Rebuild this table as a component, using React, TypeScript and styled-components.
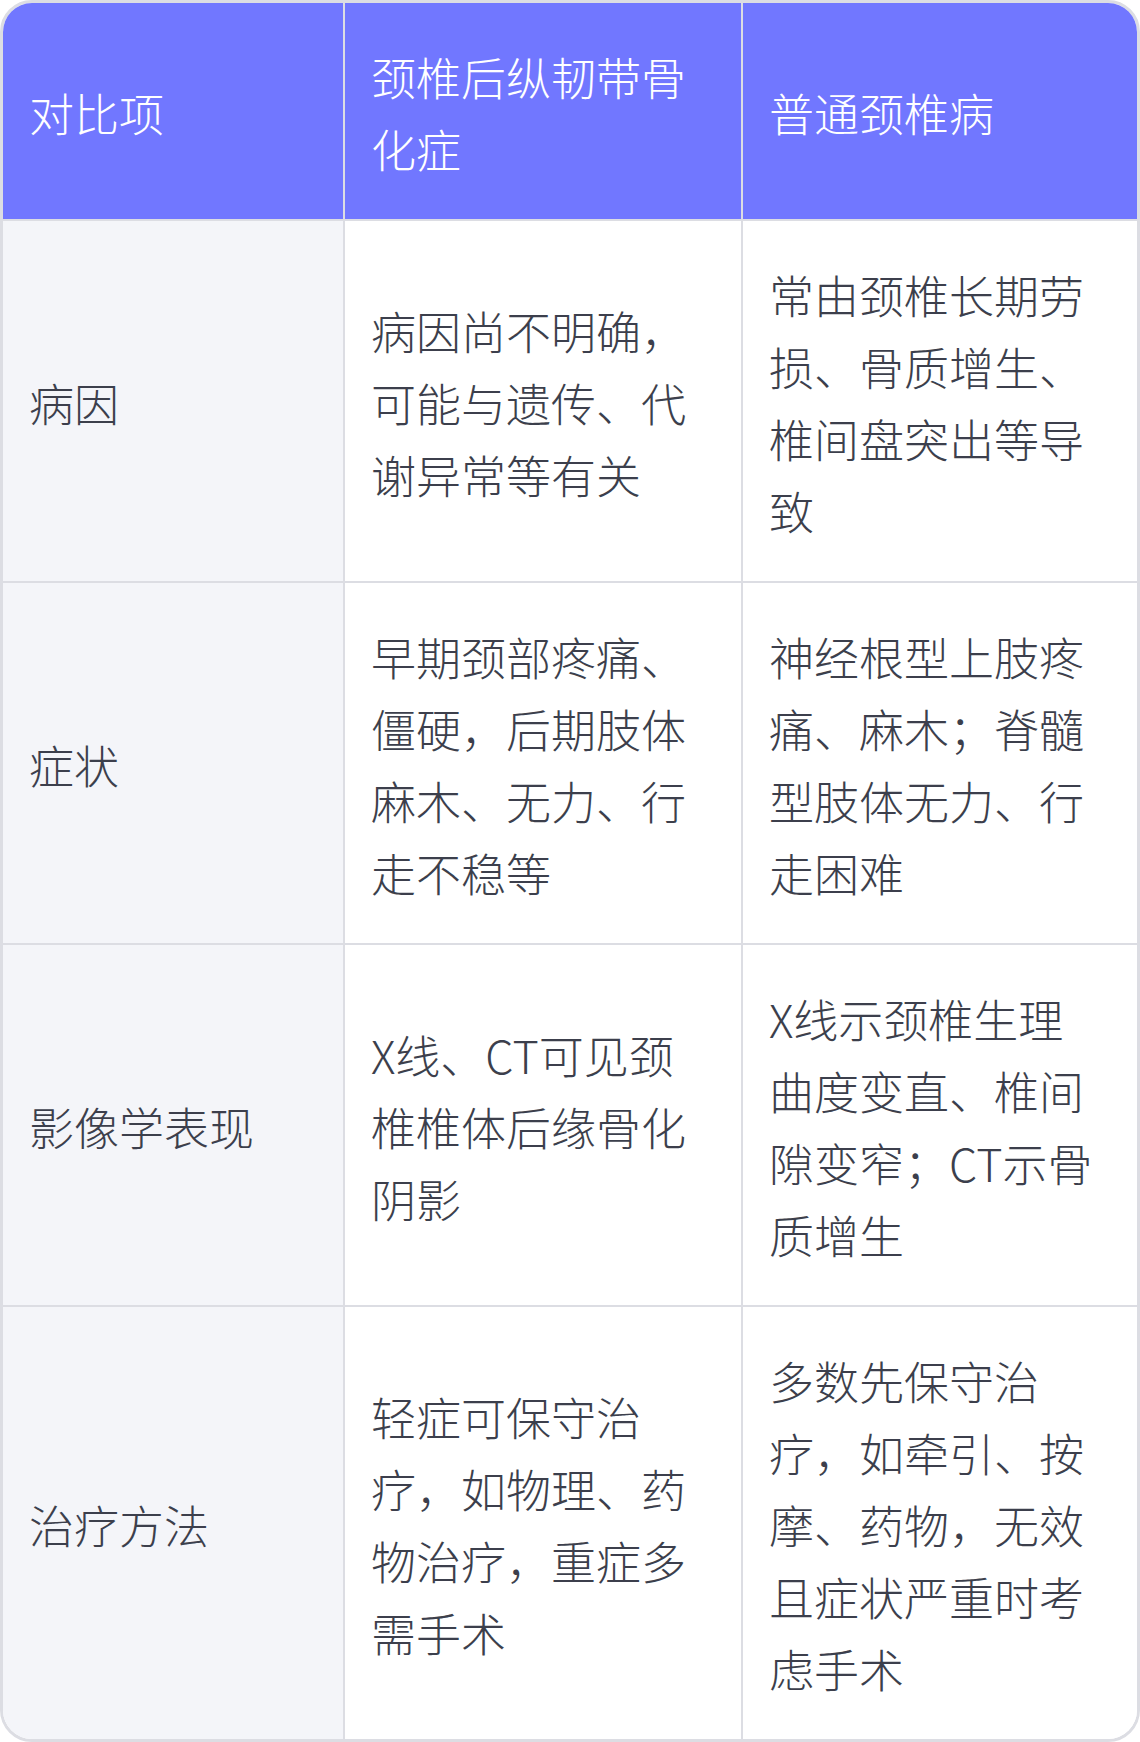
import styled, { createGlobalStyle } from "styled-components";

const rows: { item: string; ossified: string; common: string }[] = [
  {
    item: "病因",
    ossified: "病因尚不明确，可能与遗传、代谢异常等有关",
    common: "常由颈椎长期劳损、骨质增生、椎间盘突出等导致",
  },
  {
    item: "症状",
    ossified: "早期颈部疼痛、僵硬，后期肢体麻木、无力、行走不稳等",
    common: "神经根型上肢疼痛、麻木；脊髓型肢体无力、行走困难",
  },
  {
    item: "影像学表现",
    ossified: "X线、CT可见颈椎椎体后缘骨化阴影",
    common: "X线示颈椎生理曲度变直、椎间隙变窄；CT示骨质增生",
  },
  {
    item: "治疗方法",
    ossified: "轻症可保守治疗，如物理、药物治疗，重症多需手术",
    common: "多数先保守治疗，如牵引、按摩、药物，无效且症状严重时考虑手术",
  },
];

export default function App() {
  return (
    <>
      <GlobalStyle />
      <Frame>
        <Table>
          <colgroup>
            <col style={{ width: 342 }} />
            <col style={{ width: 398 }} />
            <col />
          </colgroup>
          <thead>
            <tr>
              <HeadCell>对比项</HeadCell>
              <HeadCell>颈椎后纵韧带骨化症</HeadCell>
              <HeadCell>普通颈椎病</HeadCell>
            </tr>
          </thead>
          <tbody>
            {rows.map((r) => (
              <tr key={r.item}>
                <Cell $label>{r.item}</Cell>
                <Cell>{r.ossified}</Cell>
                <Cell>{r.common}</Cell>
              </tr>
            ))}
          </tbody>
        </Table>
      </Frame>
    </>
  );
}

const GlobalStyle = createGlobalStyle`
  html, body {
    margin: 0;
    padding: 0;
    background: #ffffff;
  }
  body {
    font-family: "Noto Sans CJK SC Light", "Noto Sans CJK SC DemiLight",
      "Noto Sans CJK SC", "Noto Sans", sans-serif;
  }
`;

const Frame = styled.div`
  width: 1140px;
  height: 1742px;
  box-sizing: border-box;
  border: 3px solid #dcdde3;
  border-radius: 32px;
  overflow: hidden;
  background: #ffffff;
`;

const Table = styled.table`
  width: 100%;
  table-layout: fixed;
  border-collapse: separate;
  border-spacing: 0;
  font-size: 45px;
  font-weight: 300;
  line-height: 72px;

  tr > *:last-child {
    border-right: none;
    padding-right: 30px;
  }
  tbody tr:last-child > td {
    border-bottom: none;
  }
`;

const HeadCell = styled.th`
  background: #7177ff;
  color: #ffffff;
  font-weight: 300;
  text-align: left;
  vertical-align: middle;
  padding: 38px 26px 34px;
  border-right: 2px solid #dcdde3;
  border-bottom: 2px solid #dcdde3;
`;

const Cell = styled.td<{ $label?: boolean }>`
  background: ${(p) => (p.$label ? "#f4f5f9" : "#ffffff")};
  color: #3c3f4c;
  vertical-align: middle;
  padding: 38px 26px 34px;
  border-right: 2px solid #dcdde3;
  border-bottom: 2px solid #dcdde3;
`;
